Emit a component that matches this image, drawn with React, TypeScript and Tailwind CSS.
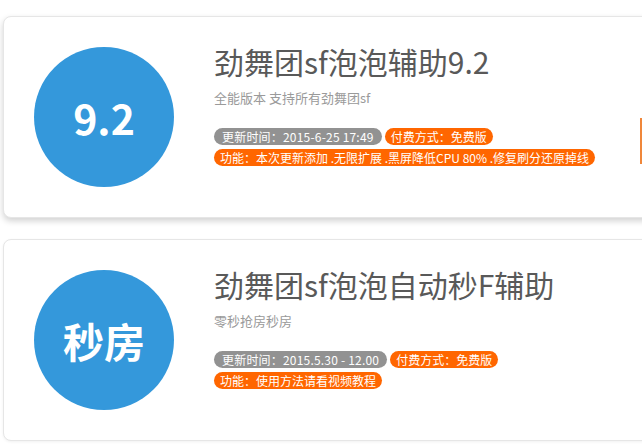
import React from 'react';

type Item = {
  badge: string;
  title: string;
  desc: string;
  updated: string;
  feature: string;
  hovered?: boolean;
};

const items: Item[] = [
  {
    badge: '9.2',
    title: '劲舞团sf泡泡辅助9.2',
    desc: '全能版本 支持所有劲舞团sf',
    updated: '更新时间：2015-6-25 17:49',
    feature: '功能：本次更新添加 .无限扩展 .黑屏降低CPU 80% .修复刷分还原掉线',
    hovered: true,
  },
  {
    badge: '秒房',
    title: '劲舞团sf泡泡自动秒F辅助',
    desc: '零秒抢房秒房',
    updated: '更新时间：2015.5.30 - 12.00',
    feature: '功能：使用方法请看视频教程',
  },
];

const Tag = ({ children, gray }: { children: React.ReactNode; gray?: boolean }) => (
  <span
    className={`inline-flex h-[17px] items-center rounded-full px-[6px] text-[12px] leading-none text-white whitespace-nowrap ${
      gray ? 'bg-[#929292] px-[8px] tracking-[0.2px]' : 'bg-[#ff6600]'
    }`}
  >
    {children}
  </span>
);

const Card = ({ item }: { item: Item }) => (
  <div
    className={`flex w-[780px] rounded-[8px] border border-[#e6e6e6] bg-white p-[30px] ${
      item.hovered ? 'shadow-[0_3px_6px_rgba(0,0,0,0.18)]' : 'shadow-[0_1px_3px_rgba(0,0,0,0.06)]'
    }`}
  >
    {/* round badge */}
    <div className="flex h-[140px] w-[140px] shrink-0 items-center justify-center rounded-full bg-[#3498db]">
      <span className="text-[41px] font-bold leading-none text-white">{item.badge}</span>
    </div>

    <div className="ml-[40px] w-[426px] shrink-0">
      <h2 className="-mt-[5px] text-[30px] font-normal leading-[38px] text-[#595959]">{item.title}</h2>
      <p className="mt-[8px] text-[13px] leading-[20px] text-[#9a9a9a]">{item.desc}</p>
      <div className="mt-[20px] flex flex-col items-start gap-[4px]">
        <div className="flex gap-[3px]">
          <Tag gray>{item.updated}</Tag>
          <Tag>付费方式：免费版</Tag>
        </div>
        <Tag>{item.feature}</Tag>
      </div>
    </div>

    {item.hovered && (
      <div className="mt-[71px] h-[46px] w-[110px] shrink-0 border-2 border-[#f0873a] bg-white" />
    )}
  </div>
);

export default function App() {
  return (
    <div
      className="min-h-[445px] w-[642px] overflow-hidden bg-white pt-[16px] pl-[3px]"
      style={{ fontFamily: '"Noto Sans CJK SC", "Noto Sans", sans-serif' }}
    >
      <div className="flex flex-col gap-[21px]">
        {items.map((item) => (
          <Card key={item.title} item={item} />
        ))}
      </div>
    </div>
  );
}
